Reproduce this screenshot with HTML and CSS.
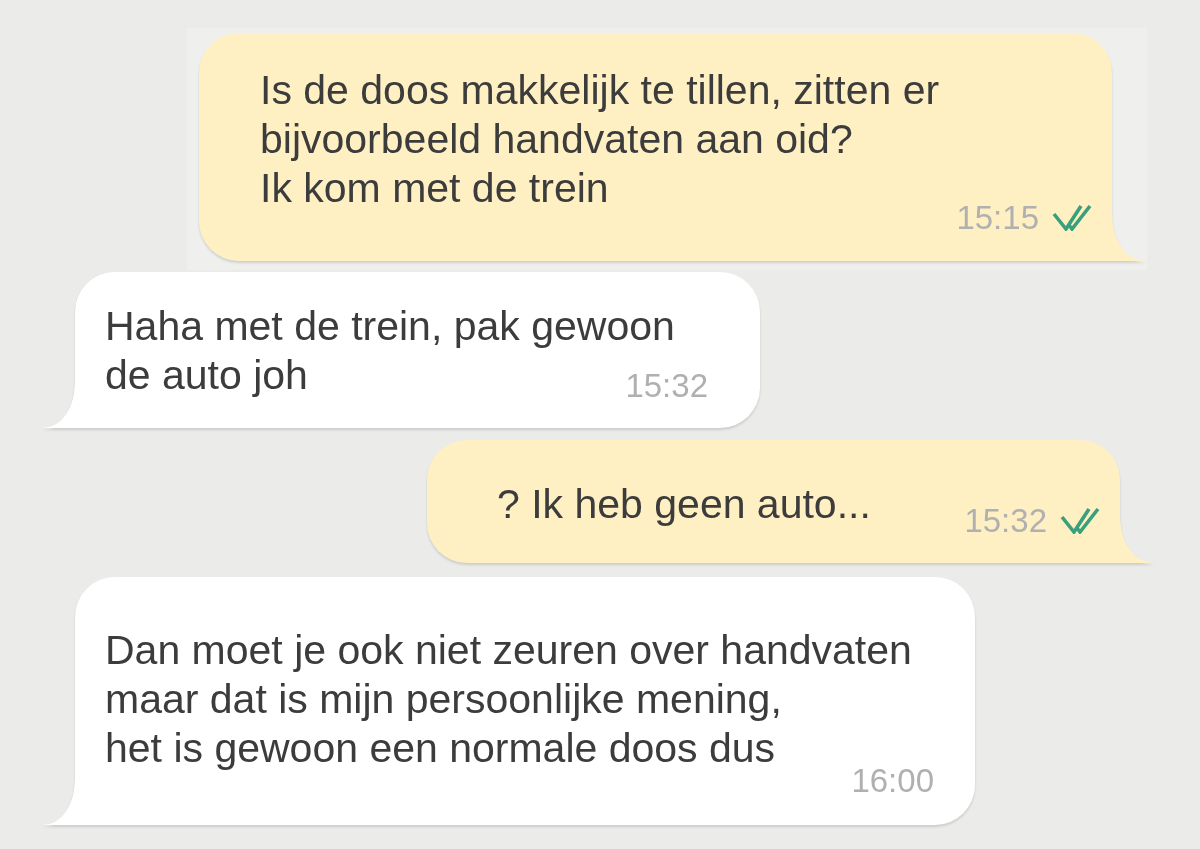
FILE: index.html
```html
<!DOCTYPE html>
<html lang="nl">
<head>
<meta charset="utf-8">
<title>Chat</title>
<link rel="stylesheet" href="styles.css">
</head>
<body>
<main class="chat">
  <div class="panel">
    <div class="bubble out b1">
      <p class="text">Is de doos makkelijk te tillen, zitten er<br>bijvoorbeeld handvaten aan oid?<br>Ik kom met de trein</p>
      <div class="meta"><span class="time">15:15</span><svg class="ticks" viewBox="0 0 40 28" width="40" height="28"><path d="M2 11 L14 26 L29 3 M17 22 L20 26 L38 3" fill="none" stroke="#3a9f7b" stroke-width="3.6" stroke-linejoin="miter" stroke-linecap="butt"/></svg></div>
    </div>
  </div>
  <div class="bubble in b2">
    <p class="text">Haha met de trein, pak gewoon<br>de auto joh</p>
    <div class="meta"><span class="time">15:32</span></div>
  </div>
  <div class="bubble out b3">
    <p class="text">? Ik heb geen auto...</p>
    <div class="meta"><span class="time">15:32</span><svg class="ticks" viewBox="0 0 40 28" width="40" height="28"><path d="M2 11 L14 26 L29 3 M17 22 L20 26 L38 3" fill="none" stroke="#3a9f7b" stroke-width="3.6" stroke-linejoin="miter" stroke-linecap="butt"/></svg></div>
  </div>
  <div class="bubble in b4">
    <p class="text">Dan moet je ook niet zeuren over handvaten<br>maar dat is mijn persoonlijke mening,<br>het is gewoon een normale doos dus</p>
    <div class="meta"><span class="time">16:00</span></div>
  </div>
</main>
</body>
</html>
```

FILE: styles.css
```css
* { box-sizing: border-box; }
html, body { margin: 0; padding: 0; }
body {
  background: #ebebe9;
  width: 1200px;
  height: 849px;
  overflow: hidden;
  font-family: "Liberation Sans", Arial, sans-serif;
  color: #3c3c3c;
}
.chat {
  display: flex;
  flex-direction: column;
  padding-top: 28px;
}
.panel {
  margin-left: 187px;
  width: 960px;
  padding: 5px 35px 9px 12px;
  background: #efefee;
}
.bubble {
  position: relative;
  border-radius: 40px;
  filter: drop-shadow(0 2px 1px rgba(0, 0, 0, 0.13));
}
.bubble.out {
  background: #fff0c4;
  border-bottom-right-radius: 0;
  align-self: flex-end;
}
.bubble.in {
  background: #ffffff;
  border-bottom-left-radius: 0;
  align-self: flex-start;
}
.bubble.out::after {
  content: "";
  position: absolute;
  right: -33px;
  bottom: 0;
  width: 33px;
  height: 44px;
  background: radial-gradient(33px 44px at 100% 0, transparent 98%, #fff0c4 100%);
}
.bubble.in::before {
  content: "";
  position: absolute;
  left: -31px;
  bottom: 0;
  width: 31px;
  height: 44px;
  background: radial-gradient(31px 44px at 0 0, transparent 98%, #ffffff 100%);
}
.text {
  margin: 0;
  font-size: 41px;
  line-height: 49px;
  white-space: nowrap;
}
.meta {
  display: flex;
  justify-content: flex-end;
  align-items: center;
  gap: 13px;
  height: 36px;
}
.time {
  font-size: 33px;
  line-height: 36px;
  color: #b0b0b0;
}
.ticks { display: block; margin-top: -2px; }

.b1 { width: 913px; padding: 33px 20px 25px 61px; }
.b1 .meta { margin-top: -13px; }

.b2 { width: 685px; margin-left: 75px; margin-top: 2px; padding: 30px 52px 24px 30px; }
.b2 .meta { margin-top: -32px; }

.b3 { width: 693px; margin-right: 80px; margin-top: 12px; padding: 40px 20px 24px 70px; }
.b3 .meta { margin-top: -26px; }

.b4 { width: 900px; margin-left: 75px; margin-top: 14px; padding: 49px 41px 26px 30px; }
.b4 .meta { margin-top: -10px; }
```
